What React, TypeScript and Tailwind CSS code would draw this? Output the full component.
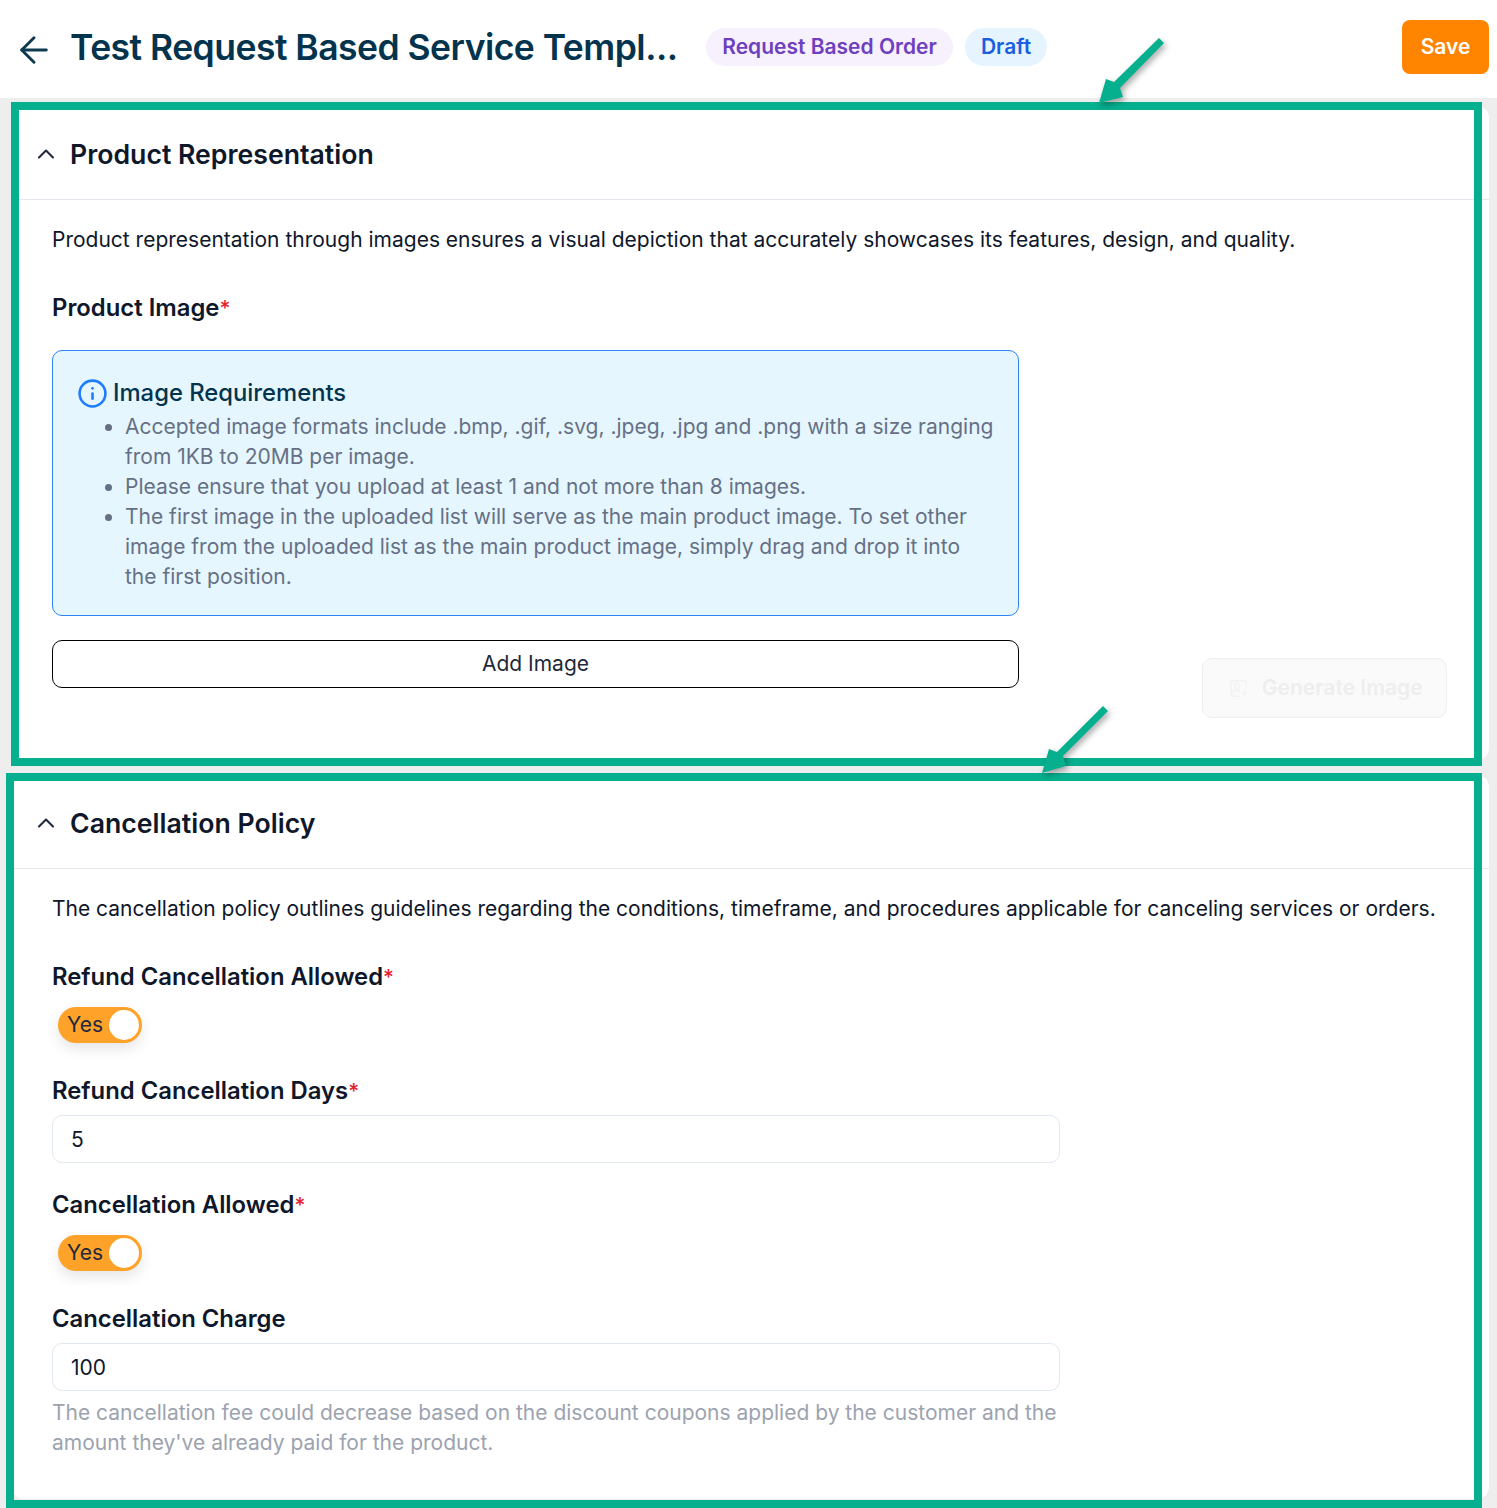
import React from "react";
import { ArrowLeft, ChevronUp, Info } from "lucide-react";

function Label({ text, required = true }: { text: string; required?: boolean }) {
  return (
    <div className="h-[30px] text-[23.85px] leading-[30px] font-semibold text-[#0f172a]">
      {text}
      {required && <span className="text-[21px] font-medium text-[#e7222e]">*</span>}
    </div>
  );
}

function Section({ title, children }: { title: string; children: React.ReactNode }) {
  return (
    <section className="rounded-[12px] bg-white">
      <div className="flex h-[94px] items-center border-b border-[#e5e7ef] pl-[20px]">
        <ChevronUp size={28} strokeWidth={1.8} className="mt-[2px] text-[#1e293b]" />
        <h2 className="ml-[10px] pt-[2px] text-[26.67px] font-semibold text-[#0f172a]">{title}</h2>
      </div>
      <div className="pl-[40px] pr-[42px] pt-[24px]">{children}</div>
    </section>
  );
}

function Toggle() {
  return (
    <div className="pb-[6px] pt-[15px] pl-[6px]">
      <div className="flex h-[36px] w-[84px] items-center justify-between rounded-full bg-[#ffa229] pl-[9px] pr-[3px] shadow-[0_6px_14px_rgba(0,0,0,0.10)]">
        <span className="text-[21px] text-[#1e293b]">Yes</span>
        <span className="h-[30px] w-[30px] rounded-full bg-white" />
      </div>
    </div>
  );
}

function Field({ value }: { value: string }) {
  return (
    <div className="mt-[9px] flex h-[48px] w-[1008px] items-center rounded-[10px] border border-[#e2e8f0] px-[18px] pt-[2px] text-[21px] text-[#0f172a]">
      {value}
    </div>
  );
}

function GreenArrow({ points }: { points: string }) {
  return (
    <svg className="absolute left-0 top-0 h-[1508px] w-[1497px] drop-shadow-[2px_3px_3px_rgba(0,0,0,0.35)]" viewBox="0 0 1497 1508" fill="#06b08f">
      <polygon points={points} />
    </svg>
  );
}

export default function App() {
  return (
    <div className="relative h-[1508px] overflow-hidden bg-[#eeeeee] font-['Inter',sans-serif]">
      <header className="flex h-[98px] items-center bg-white pl-[13px] pr-[8px]">
        <ArrowLeft size={42} strokeWidth={1.7} className="mt-[2px] text-[#0f3a50]" />
        <h1 className="mb-[3px] ml-[15px] w-[607px] text-[35.5px] font-semibold tracking-[-0.53px] whitespace-nowrap text-[#04344d]">Test Request Based Service Templ...</h1>
        <span className="mb-[4px] ml-[29px] flex h-[38px] w-[247px] items-center justify-center rounded-full bg-[#f7f0fd] text-[21px] font-semibold text-[#6e3fc0]">Request Based Order</span>
        <span className="mb-[4px] ml-[12px] flex h-[38px] w-[82px] items-center justify-center rounded-full bg-[#e5f4ff] text-[21px] font-semibold text-[#1a5fe0]">Draft</span>
        <button className="mb-[4px] ml-auto h-[54px] w-[87px] rounded-[8px] bg-[#ff8400] text-[21px] font-semibold text-white">Save</button>
      </header>

      <main className="flex flex-col gap-[15px] pl-[12px] pr-[8px] pt-[8px]">
        <Section title="Product Representation">
          <p className="-mb-[1px] pt-[1px] text-[21px] leading-[30px] text-[#0f172a]">Product representation through images ensures a visual depiction that accurately showcases its features, design, and quality.</p>
          <div className="mt-[39px] flex items-end justify-between pb-[42px]">
            <div className="w-[967px] pb-[30px]">
              <Label text="Product Image" />
              <div className="mt-[27px] h-[266px] rounded-[10px] border border-[#2b84f5] bg-[#e5f6ff] pl-[25px] pr-[23px] pt-[27px]">
                <div className="flex h-[30px] items-center gap-[5px] text-[23.8px] font-medium text-[#04344d]">
                  <Info size={31} strokeWidth={2} className="-ml-[1px] text-[#1f7bff]" />
                  Image Requirements
                </div>
                <ul className="mt-[4px] list-disc pl-[47px] text-[21px] leading-[30px] text-[#667085]">
                  <li>Accepted image formats include .bmp, .gif, .svg, .jpeg, .jpg and .png with a size ranging from 1KB to 20MB per image.</li>
                  <li>Please ensure that you upload at least 1 and not more than 8 images.</li>
                  <li>The first image in the uploaded list will serve as the main product image. To set other image from the uploaded list as the main product image, simply drag and drop it into the first position.</li>
                </ul>
              </div>
              <button className="mt-[24px] h-[48px] w-full rounded-[10px] border border-black text-[21px] text-[#1f2937]">Add Image</button>
            </div>
            <button className="flex h-[60px] w-[245px] items-center justify-center gap-[13.5px] rounded-[10px] border border-[#efefef] bg-[#fafafa] pl-[3px] text-[21px] font-semibold text-[#eeeeee]">
              <svg width="19" height="19" viewBox="0 0 22 22" fill="none" stroke="#f2f2f2" strokeWidth="1.6">
                <path d="M20 11V4a2 2 0 0 0-2-2H4a2 2 0 0 0-2 2v14a2 2 0 0 0 2 2h8" />
                <circle cx="9" cy="8" r="2.6" />
                <path d="M3 19c0-4 3-6 6-6 2 0 3 1 4 2" />
                <path d="M18 14v6M15 17h6" />
              </svg>
              Generate Image
            </button>
          </div>
        </Section>

        <Section title="Cancellation Policy">
          <p className="-mb-[1px] pt-[1px] text-[21px] leading-[30px] whitespace-nowrap text-[#0f172a]">The cancellation policy outlines guidelines regarding the conditions, timeframe, and procedures applicable for canceling services or orders.</p>
          <div className="mt-[39px] pb-[41px]">
            <Label text="Refund Cancellation Allowed" />
            <Toggle />
            <div className="mt-[27px]">
              <Label text="Refund Cancellation Days" />
              <Field value="5" />
            </div>
            <div className="mt-[27px]">
              <Label text="Cancellation Allowed" />
              <Toggle />
            </div>
            <div className="mt-[27px]">
              <Label text="Cancellation Charge" required={false} />
              <Field value="100" />
              <p className="mt-[7px] w-[1010px] text-[21px] leading-[30px] text-[#9ca3af]">The cancellation fee could decrease based on the discount coupons applied by the customer and the amount they've already paid for the product.</p>
            </div>
          </div>
        </Section>
      </main>

      <div className="absolute left-[11px] top-[102px] h-[664px] w-[1471px] border-[8px] border-[#06b08f]" />
      <div className="absolute left-[6px] top-[773px] h-[735px] w-[1476px] border-[8px] border-[#06b08f]" />
      <GreenArrow points="1159,38 1164,43 1120,88 1123,97 1099,103 1106,79 1114,82" />
      <GreenArrow points="1103,706 1108,711 1063,756 1066,766 1042,773 1049,749 1057,752" />
    </div>
  );
}
